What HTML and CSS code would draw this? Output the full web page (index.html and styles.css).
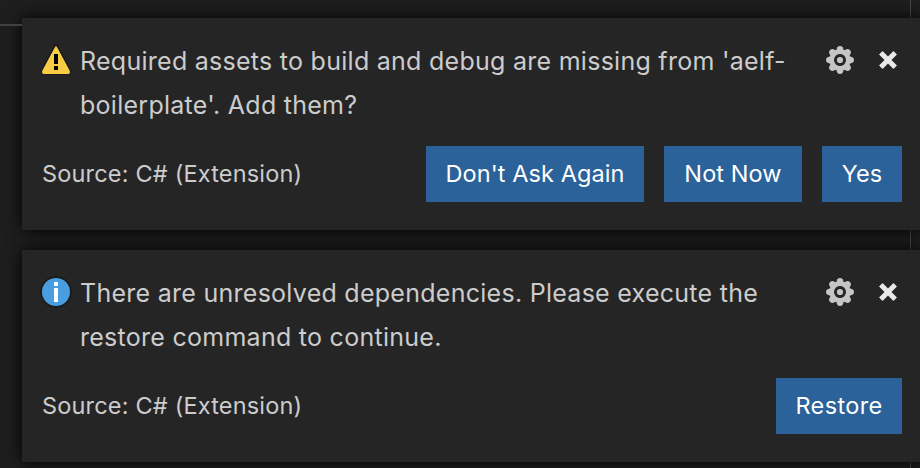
FILE: index.html
```
<!DOCTYPE html>
<html lang="en">
<head>
<meta charset="utf-8">
<title>Notifications</title>
<link rel="stylesheet" href="styles.css">
</head>
<body>
<svg class="defs" width="0" height="0" aria-hidden="true">
  <defs>
    <path id="tooth" d="M-4.6-8 -2.6-12.8Q-2-14 0-14T2.6-12.8L4.6-8Z"/>
    <symbol id="gear" viewBox="-14 -14 28 28">
      <g fill="#c5c5c5">
        <use href="#tooth"/><use href="#tooth" transform="rotate(45)"/><use href="#tooth" transform="rotate(90)"/><use href="#tooth" transform="rotate(135)"/><use href="#tooth" transform="rotate(180)"/><use href="#tooth" transform="rotate(225)"/><use href="#tooth" transform="rotate(270)"/><use href="#tooth" transform="rotate(315)"/>
        <circle r="7.9" fill="none" stroke="#c5c5c5" stroke-width="4.4"/>
      </g>
      <circle r="5.9" fill="#252526"/>
      <circle r="3.1" fill="#c5c5c5"/>
    </symbol>
    <symbol id="close" viewBox="-10 -10 20 20">
      <path d="M-7.2-7.2 7.2 7.2M7.2-7.2-7.2 7.2" stroke="#e8e8e8" stroke-width="5"/>
    </symbol>
  </defs>
</svg>
<div class="editor-edge"></div>
<div class="ruler"></div>
<main class="toasts">
  <section class="toast">
    <div class="main-row">
      <svg class="status" viewBox="0 0 32 32">
        <path d="M16 2.8 28.6 27.2 27.6 28.6H4.4L3.4 27.2Z" fill="#1b1b1c" stroke="#1b1b1c" stroke-width="5" stroke-linejoin="round"/>
        <path d="M14.9 3.2Q16 1.1 17.1 3.2L29.6 26.5Q30.8 29.6 28 30H4Q1.2 29.6 2.4 26.5Z" fill="#f9cc45"/>
        <path d="M14 10h4v10h-4zM14 22h4v4h-4z" fill="#000"/>
      </svg>
      <p class="message">Required assets to build and debug are missing from 'aelf-<br>boilerplate'. Add them?</p>
      <div class="tools"><svg class="gear"><use href="#gear"/></svg><svg class="close"><use href="#close"/></svg></div>
    </div>
    <div class="details">
      <span class="source">Source: C# (Extension)</span>
      <div class="buttons">
        <button class="wide">Don't Ask Again</button>
        <button class="medium">Not Now</button>
        <button class="small">Yes</button>
      </div>
    </div>
  </section>
  <section class="toast">
    <div class="main-row">
      <svg class="status" viewBox="0 0 32 32">
        <circle cx="16" cy="16" r="15.8" fill="#1b1b1c"/>
        <circle cx="16" cy="16" r="14" fill="#489ee0"/>
        <path d="M14 6h4v4h-4zM14 12h4v14h-4z" fill="#fff"/>
      </svg>
      <p class="message">There are unresolved dependencies. Please execute the<br>restore command to continue.</p>
      <div class="tools"><svg class="gear"><use href="#gear"/></svg><svg class="close"><use href="#close"/></svg></div>
    </div>
    <div class="details">
      <span class="source">Source: C# (Extension)</span>
      <div class="buttons"><button class="restore">Restore</button></div>
    </div>
  </section>
</main>
</body>
</html>
```
FILE: styles.css
```
* { box-sizing: border-box; }
body {
  position: relative;
  margin: 0;
  width: 920px;
  height: 468px;
  overflow: hidden;
  background: #1e1e1e;
  color: #cccccc;
  font-family: Inter, "Liberation Sans", sans-serif;
}
.defs { position: absolute; }
.editor-edge {
  position: absolute;
  z-index: 1;
  top: 24px;
  left: 0;
  width: 22px;
  height: 2px;
  background: #414141;
}
.ruler {
  position: absolute;
  top: 0;
  left: 910px;
  width: 1px;
  height: 468px;
  background: #4a4a4a;
}
.toasts {
  position: relative;
  display: flex;
  flex-direction: column;
  gap: 20px;
  padding: 18px 0 0 22px;
}
.toast {
  width: 900px;
  height: 212px;
  padding: 20px;
  background: #252526;
  box-shadow: 0 0 16px #000;
}
.main-row { display: flex; height: 108px; }
.status { width: 32px; height: 32px; margin: 6px 6px 0 -2px; flex: none; }
.message {
  flex: 1;
  margin: 1px 0 0 2px;
  font-size: 25px;
  letter-spacing: 0.27px;
  line-height: 44px;
  white-space: nowrap;
}
.tools {
  display: flex;
  align-items: center;
  gap: 24px;
  height: 44px;
  margin-right: 4px;
}
.gear { width: 28px; height: 28px; }
.close { width: 20px; height: 20px; }
.details {
  display: flex;
  justify-content: space-between;
  align-items: center;
  height: 56px;
}
.source { padding-bottom: 2px; font-size: 23.5px; letter-spacing: 0.18px; }
.buttons { display: flex; gap: 20px; }
button {
  height: 56px;
  padding: 0 0 2px;
  border: 0;
  background: #2b6299;
  color: #fff;
  font: 23.5px Inter, "Liberation Sans", sans-serif;
  letter-spacing: 0.08px;
  white-space: nowrap;
}
.wide { width: 218px; }
.medium { width: 138px; }
.small { width: 80px; }
.restore { width: 126px; letter-spacing: 0.35px; }
```
